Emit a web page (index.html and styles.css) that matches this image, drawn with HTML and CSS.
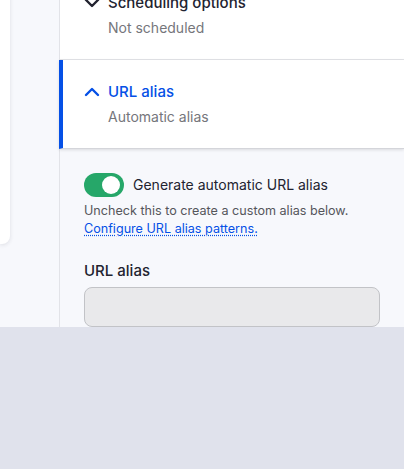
FILE: index.html
```html
<!DOCTYPE html>
<html lang="en">
<head>
    <meta charset="UTF-8">
    <meta name="viewport" content="width=device-width, initial-scale=1.0">
    <title>Edit content</title>
    <link rel="stylesheet" href="styles.css">
</head>
<body>

    <div class="layout">
        <div class="main">
            <div class="main-card"></div>
        </div>

        <aside class="sidebar">
            <details class="side-section">
                <summary>
                    <svg class="chevron" width="16" height="10" viewBox="0 0 16 10" aria-hidden="true">
                        <path d="M2 2 L8 8 L14 2" fill="none" stroke="currentColor" stroke-width="2.4" stroke-linecap="round" stroke-linejoin="round"/>
                    </svg>
                    <span class="summary-title">Scheduling options</span>
                    <span class="summary-value">Not scheduled</span>
                </summary>
            </details>

            <details class="side-section is-open" open>
                <summary>
                    <svg class="chevron" width="16" height="10" viewBox="0 0 16 10" aria-hidden="true">
                        <path d="M2 8 L8 2 L14 8" fill="none" stroke="currentColor" stroke-width="2.4" stroke-linecap="round" stroke-linejoin="round"/>
                    </svg>
                    <span class="summary-title">URL alias</span>
                    <span class="summary-value">Automatic alias</span>
                </summary>
            </details>

            <div class="side-body">
                <label class="switch-row">
                    <input type="checkbox" class="switch-input" checked>
                    <span class="switch"><span class="switch-knob"></span></span>
                    <span class="switch-label">Generate automatic URL alias</span>
                </label>
                <p class="description">
                    Uncheck this to create a custom alias below.<br>
                    <a href="#" class="help-link">Configure URL alias patterns.</a>
                </p>

                <div class="form-item">
                    <label for="path-alias" class="form-label">URL alias</label>
                    <input type="text" id="path-alias" class="form-input" disabled>
                </div>
            </div>
        </aside>
    </div>

</body>
</html>
```

FILE: styles.css
```css
html {
    background-color: #e0e2ec;
}

body {
    margin: 0;
    padding: 0;
    font-family: Inter, "Noto Sans", sans-serif;
    color: #222330;
}

.layout {
    display: flex;
    height: 356px;
    margin-top: -29px;
    background-color: #f7f8fc;
    overflow: hidden;
}

.main {
    width: 59px;
    flex-shrink: 0;
    padding-right: 49px;
    box-sizing: border-box;
}

.main-card {
    height: 273px;
    background-color: #fff;
    border-radius: 0 0 8px 0;
    box-shadow: 0 1px 4px rgba(34, 35, 48, 0.12);
}

.sidebar {
    flex: 1;
    border-left: 1px solid #e2e3e8;
    background-color: #f7f8fc;
}

.side-section {
    background-color: #fff;
    border-bottom: 1px solid #e3e4e8;
    padding: 21px 24px 20px 24px;
}

.side-section summary {
    display: grid;
    grid-template-columns: 16px 1fr;
    column-gap: 8px;
    row-gap: 3px;
    align-items: center;
    list-style: none;
    cursor: pointer;
}

.side-section summary::-webkit-details-marker {
    display: none;
}

.summary-title {
    font-size: 15px;
    font-weight: 500;
    line-height: 22px;
}

.summary-value {
    grid-column: 2;
    font-size: 14px;
    line-height: 22px;
    color: #75767b;
}

.side-section.is-open {
    margin-left: -1px;
    border-left: 4px solid #0550e6;
    padding-left: 21px;
    border-bottom: 1px solid #d4d5da;
    box-shadow: 0 1px 3px rgba(0, 0, 0, 0.12);
}

.side-section.is-open .chevron,
.side-section.is-open .summary-title {
    color: #0550e6;
}

.side-body {
    padding: 24px 24px 0 24px;
}

.switch-row {
    display: flex;
    align-items: center;
    gap: 9px;
    font-size: 14px;
    line-height: 24px;
}

.switch-input {
    display: none;
}

.switch {
    position: relative;
    width: 40px;
    height: 24px;
    border-radius: 12px;
    background-color: #26a769;
    flex-shrink: 0;
}

.switch-knob {
    position: absolute;
    top: 3px;
    right: 4px;
    width: 18px;
    height: 18px;
    border-radius: 50%;
    background-color: #fff;
}

.description {
    margin: 5px 0 0 0;
    font-size: 12.6px;
    line-height: 17.5px;
    color: #55565b;
}

.help-link {
    color: #0550e6;
    text-decoration: underline dotted;
    text-underline-offset: 2px;
}

.form-item {
    margin-top: 23px;
}

.form-label {
    display: block;
    font-size: 15px;
    font-weight: 500;
    line-height: 22px;
    margin-bottom: 5px;
}

.form-input {
    display: block;
    width: 100%;
    height: 40px;
    box-sizing: border-box;
    border: 1px solid #c2c3c7;
    border-radius: 8px;
    background-color: #e9e9eb;
}
```
